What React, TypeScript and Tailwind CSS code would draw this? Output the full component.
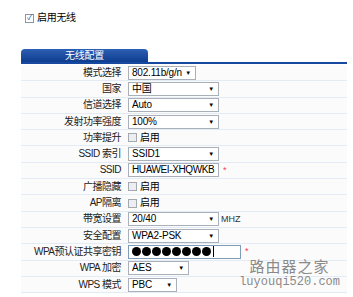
import type { ReactNode } from "react";

const font = { fontFamily: '"Liberation Sans", "Noto Sans CJK SC", sans-serif' };

function Select({ value, width }: { value: string; width: string }) {
  return (
    <div
      className={`flex h-[14px] items-center justify-between whitespace-nowrap border border-[#a9b0b9] bg-white pl-[3px] pr-[4px] text-[10px] leading-none tracking-[-0.2px] text-black ${width}`}
    >
      <span>{value}</span>
      <span className="text-[6px] leading-none">▼</span>
    </div>
  );
}

function TextBox({ children, width }: { children: ReactNode; width: string }) {
  return (
    <div
      className={`flex h-[14px] items-center overflow-hidden whitespace-nowrap border bg-white pl-[3px] text-[10px] leading-none text-black ${width}`}
    >
      {children}
    </div>
  );
}

function Check({ label }: { label: string }) {
  return (
    <div className="flex items-center gap-[3px] whitespace-nowrap text-[10px] leading-none tracking-[-0.3px] text-black">
      <span className="h-[9px] w-[9px] border border-[#a4a9b0] bg-[#eceef1]" />
      <span>{label}</span>
    </div>
  );
}

function Star() {
  return <span className="ml-[4px] text-[9px] leading-none text-[#ff3355]">*</span>;
}

const dots = [0, 1, 2, 3, 4, 5, 6, 7];

const rows: { label: string; value: ReactNode }[] = [
  { label: "模式选择", value: <Select value="802.11b/g/n" width="w-[68px]" /> },
  { label: "国家", value: <Select value="中国" width="w-[91px]" /> },
  { label: "信道选择", value: <Select value="Auto" width="w-[91px]" /> },
  { label: "发射功率强度", value: <Select value="100%" width="w-[91px]" /> },
  { label: "功率提升", value: <Check label="启用" /> },
  { label: "SSID 索引", value: <Select value="SSID1" width="w-[91px]" /> },
  {
    label: "SSID",
    value: (
      <div className="flex items-center">
        <TextBox width="w-[91px] border-[#a9b0b9] tracking-[-0.4px]">HUAWEI-XHQWKB</TextBox>
        <Star />
      </div>
    ),
  },
  { label: "广播隐藏", value: <Check label="启用" /> },
  { label: "AP隔离", value: <Check label="启用" /> },
  {
    label: "带宽设置",
    value: (
      <div className="flex items-center">
        <Select value="20/40" width="w-[91px]" />
        <span className="ml-[2px] text-[9px] leading-none text-[#333]">MHZ</span>
      </div>
    ),
  },
  { label: "安全配置", value: <Select value="WPA2-PSK" width="w-[91px]" /> },
  {
    label: "WPA预认证共享密钥",
    value: (
      <div className="flex items-center">
        <TextBox width="w-[113px] border-[#7f9db9] gap-[1px]">
          {dots.map((d) => (
            <span key={d} className="h-[9px] w-[9px] rounded-full bg-black" />
          ))}
          <span className="ml-[1px] h-[11px] w-px bg-black" />
        </TextBox>
        <Star />
      </div>
    ),
  },
  { label: "WPA 加密", value: <Select value="AES" width="w-[61px]" /> },
  { label: "WPS 模式", value: <Select value="PBC" width="w-[49px]" /> },
];

export default function App() {
  return (
    <div className="relative h-[297px] w-[353px] overflow-hidden bg-white" style={font}>
      <div className="flex items-center gap-[3px] pl-[25px] pt-[13px] text-[10px] leading-none tracking-[-0.3px] text-black">
        <span className="flex h-[9px] w-[9px] items-center justify-center border border-[#8c96a3] bg-white text-[8px] leading-none text-[#2a4fa8]">
          ✓
        </span>
        <span>启用无线</span>
      </div>

      <div className="ml-[21px] mt-[26px] w-[326px]">
        <div className="flex h-[13px] w-[127px] items-center justify-center rounded-t-[4px] bg-gradient-to-b from-[#2d5fb4] to-[#0d3d8f] text-[10px] leading-none tracking-[-0.3px] text-white">
          无线配置
        </div>
        <div className="h-[2px] bg-[#1748a0]" />
        <div className="mt-[1px] bg-[#fbfbfb]">
          {rows.map((row) => (
            <div key={row.label} className="flex h-[16.3px] items-center border-b border-[#e3ebf4]">
              <div className="w-[102px] whitespace-nowrap pr-[2px] text-right text-[10px] leading-none tracking-[-0.5px] text-[#222]">
                {row.label}
              </div>
              <div className="ml-[5px] flex items-center">{row.value}</div>
            </div>
          ))}
        </div>
      </div>

      <div className="absolute right-[13px] top-[258px] flex flex-col items-center text-[#8a8a8a]">
        <span className="text-[15px] leading-none tracking-[1px]" style={{ fontFamily: '"Noto Sans CJK SC", sans-serif' }}>
          路由器之家
        </span>
        <span className="mt-[3px] text-[12px] leading-none" style={{ fontFamily: '"Liberation Mono", monospace' }}>
          luyouqi520.com
        </span>
      </div>
    </div>
  );
}
